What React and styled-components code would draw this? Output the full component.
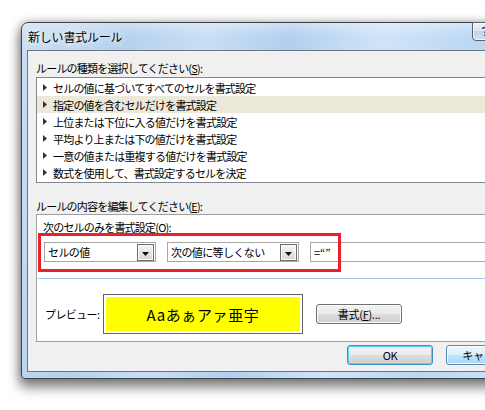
import React from "react";
import styled, { createGlobalStyle } from "styled-components";

const GlobalStyle = createGlobalStyle`
  html, body {
    margin: 0;
    padding: 0;
    background: #fff;
  }
  body {
    font-family: "Noto Sans CJK JP", "Noto Sans", sans-serif;
    color: #000;
  }
`;

const Page = styled.div`
  width: 485px;
  height: 410px;
  overflow: hidden;
  box-sizing: border-box;
  padding: 22px 0 0 21px;
`;

const Window = styled.div`
  width: 526px;
  box-sizing: border-box;
  border: 1px solid #3d4247;
  border-radius: 7px 7px 4px 4px;
  padding: 0 5px 6px 5px;
  background:
    linear-gradient(180deg, rgba(255, 255, 255, 0.35) 0px, rgba(255, 255, 255, 0) 14px),
    linear-gradient(100deg, #c9def3 0%, #b5d1ee 18%, #c8def5 32%, #b2cfee 46%, #cfe4f9 62%, #bcd7f3 78%, #d2e6fa 100%);
  box-shadow: 0 7px 12px 2px rgba(0, 0, 0, 0.45), 0 0 9px rgba(0, 0, 0, 0.28);
`;

const TitleBar = styled.div`
  display: flex;
  align-items: flex-start;
  height: 27px;
`;

const Title = styled.div`
  padding-left: 1px;
  font-size: 12px;
  line-height: 27px;
  letter-spacing: -0.2px;
  text-shadow: 0 0 6px #fff, 0 0 10px #fff;
  white-space: nowrap;
`;

const CaptionButtons = styled.div`
  display: flex;
  margin-left: auto;
  margin-top: -1px;
`;

const CaptionButton = styled.div`
  width: ${(p) => p.$width}px;
  height: 19px;
  box-sizing: border-box;
  border: 1px solid #59636e;
  border-radius: ${(p) => p.$radius};
  background: linear-gradient(180deg, #eef3f9 0%, #dbe5f1 45%, #c3d3e5 50%, #d3e1f0 100%);
  box-shadow: inset 0 0 0 1px rgba(255, 255, 255, 0.6);
  display: flex;
  align-items: center;
  justify-content: center;
`;

const Client = styled.div`
  background: #f0f0f0;
  border: 1px solid #6b7682;
  padding: 9px 8px 6px 8px;
`;

const Label = styled.div`
  font-size: 11px;
  line-height: 16px;
  letter-spacing: -0.8px;
  white-space: nowrap;
  margin-top: ${(p) => p.$top || 0}px;
  padding-left: ${(p) => p.$indent || 0}px;
`;

const ListBox = styled.div`
  margin-top: 1px;
  background: #fff;
  border: 1px solid #828790;
  padding: 1px 0;
`;

const ListRow = styled.div`
  height: 17px;
  display: flex;
  align-items: center;
  gap: 6px;
  padding-left: 6px;
  background: ${(p) => (p.$selected ? "#ece8da" : "transparent")};
  font-size: 11px;
  letter-spacing: -0.8px;
  white-space: nowrap;
`;

const EditBox = styled.div`
  position: relative;
  background: #fff;
  border: 1px solid #a0a0a0;
  padding: 4px 0 7px 0;
`;

const ConditionRow = styled.div`
  display: flex;
  gap: 11px;
  margin: 7px 0 0 7px;
`;

const Combo = styled.div`
  width: ${(p) => p.$width}px;
  height: 20px;
  box-sizing: border-box;
  border: 1px solid #a7a7a7;
  display: flex;
  align-items: center;
  justify-content: space-between;
  padding: 0 1px 0 3px;
  font-size: 11px;
  letter-spacing: -0.6px;
  white-space: nowrap;
`;

const DropButton = styled.div`
  width: 17px;
  height: 17px;
  box-sizing: border-box;
  border: 1px solid #6d6d6d;
  background: linear-gradient(180deg, #f6f6f6 0%, #e6e6e6 50%, #d6d6d6 100%);
  box-shadow: inset 0 0 0 1px #fbfbfb;
  display: flex;
  align-items: flex-end;
  justify-content: center;
  padding-bottom: 4px;
`;

const TextField = styled.div`
  flex: 1;
  height: 20px;
  box-sizing: border-box;
  border: 1px solid #a7a7a7;
  padding-left: 3px;
  font-size: 11px;
  line-height: 18px;
  white-space: nowrap;
`;

const RedFrame = styled.div`
  position: absolute;
  left: 1px;
  top: 18px;
  width: 303px;
  height: 39px;
  box-sizing: border-box;
  border: 3px solid #e8212b;
  pointer-events: none;
`;

const Separator = styled.div`
  margin: 16px 0 0 1px;
  height: 1px;
  background: #9ec7ef;
`;

const PreviewRow = styled.div`
  display: flex;
  align-items: center;
  margin-top: 15px;
  padding-left: 8px;
`;

const PreviewLabel = styled.div`
  width: 58px;
  font-size: 11px;
  letter-spacing: -0.6px;
  white-space: nowrap;
`;

const PreviewBox = styled.div`
  width: 200px;
  height: 40px;
  box-sizing: border-box;
  border: 1px solid #646464;
  padding: 2px;
  background: #fff;
`;

const PreviewFill = styled.div`
  height: 100%;
  background: #ffff00;
  display: flex;
  align-items: center;
  justify-content: center;
  font-size: 15px;
  letter-spacing: 0.6px;
  white-space: nowrap;
`;

const Button = styled.div`
  width: 86px;
  height: 20px;
  box-sizing: border-box;
  margin-left: ${(p) => p.$left || 0}px;
  border: 1px solid ${(p) => (p.$focused ? "#3c8fc3" : p.$hover ? "#5a87ad" : "#707070")};
  border-radius: 3px;
  background: ${(p) =>
    p.$hover
      ? "linear-gradient(180deg, #eaf6fd 0%, #d9f0fc 50%, #bee6fd 50%, #a7d9f5 100%)"
      : "linear-gradient(180deg, #f2f2f2 0%, #ebebeb 50%, #dddddd 50%, #cfcfcf 100%)"};
  box-shadow: inset 0 0 0 1px ${(p) => (p.$focused ? "#5fd3f5" : "#fcfcfc")};
  display: flex;
  align-items: center;
  justify-content: center;
  font-size: 11px;
  letter-spacing: -0.3px;
  white-space: nowrap;
`;

const ButtonRow = styled.div`
  display: flex;
  justify-content: flex-end;
  gap: 13px;
  margin-top: 3px;
`;

const Arrow = () => (
  <svg width="4" height="7" viewBox="0 0 4 7">
    <polygon points="0,0 4,3.5 0,7" fill="#333" />
  </svg>
);

const DownTriangle = () => (
  <svg width="7" height="4" viewBox="0 0 7 4">
    <polygon points="0,0 7,0 3.5,4" fill="#111" />
  </svg>
);

const HelpIcon = () => (
  <svg width="8" height="11" viewBox="0 0 8 11">
    <path d="M1.5 3 C1.5 1 6.5 1 6.5 3.2 C6.5 5 4 5 4 7" fill="none" stroke="#2d3f55" strokeWidth="1.6" />
    <rect x="3.2" y="8.4" width="1.6" height="1.6" fill="#2d3f55" />
  </svg>
);

const CloseIcon = () => (
  <svg width="9" height="8" viewBox="0 0 9 8">
    <path d="M1 0.5 L8 7.5 M8 0.5 L1 7.5" stroke="#2d3f55" strokeWidth="1.8" />
  </svg>
);

const ruleTypes = [
  "セルの値に基づいてすべてのセルを書式設定",
  "指定の値を含むセルだけを書式設定",
  "上位または下位に入る値だけを書式設定",
  "平均より上または下の値だけを書式設定",
  "一意の値または重複する値だけを書式設定",
  "数式を使用して、書式設定するセルを決定",
];

export default function App() {
  return (
    <Page>
      <GlobalStyle />
      <Window>
        <TitleBar>
          <Title>新しい書式ルール</Title>
          <CaptionButtons>
            <CaptionButton $width={26} $radius="0 0 0 4px">
              <HelpIcon />
            </CaptionButton>
            <CaptionButton $width={43} $radius="0 0 4px 0">
              <CloseIcon />
            </CaptionButton>
          </CaptionButtons>
        </TitleBar>
        <Client>
          <Label>
            ルールの種類を選択してください(<u>S</u>):
          </Label>
          <ListBox>
            {ruleTypes.map((text, i) => (
              <ListRow key={text} $selected={i === 1}>
                <Arrow />
                {text}
              </ListRow>
            ))}
          </ListBox>
          <Label $top={15}>
            ルールの内容を編集してください(<u>E</u>):
          </Label>
          <EditBox>
            <Label $indent={6}>
              次のセルのみを書式設定(<u>O</u>):
            </Label>
            <ConditionRow>
              <Combo $width={112}>
                セルの値
                <DropButton>
                  <DownTriangle />
                </DropButton>
              </Combo>
              <Combo $width={132}>
                次の値に等しくない
                <DropButton>
                  <DownTriangle />
                </DropButton>
              </Combo>
              <TextField>=“”</TextField>
            </ConditionRow>
            <RedFrame />
            <Separator />
            <PreviewRow>
              <PreviewLabel>プレビュー:</PreviewLabel>
              <PreviewBox>
                <PreviewFill>Aaあぁアァ亜宇</PreviewFill>
              </PreviewBox>
              <Button $left={13}>
                書式(<u>F</u>)...
              </Button>
            </PreviewRow>
          </EditBox>
          <ButtonRow>
            <Button $focused>OK</Button>
            <Button $hover>キャンセル</Button>
          </ButtonRow>
        </Client>
      </Window>
    </Page>
  );
}
